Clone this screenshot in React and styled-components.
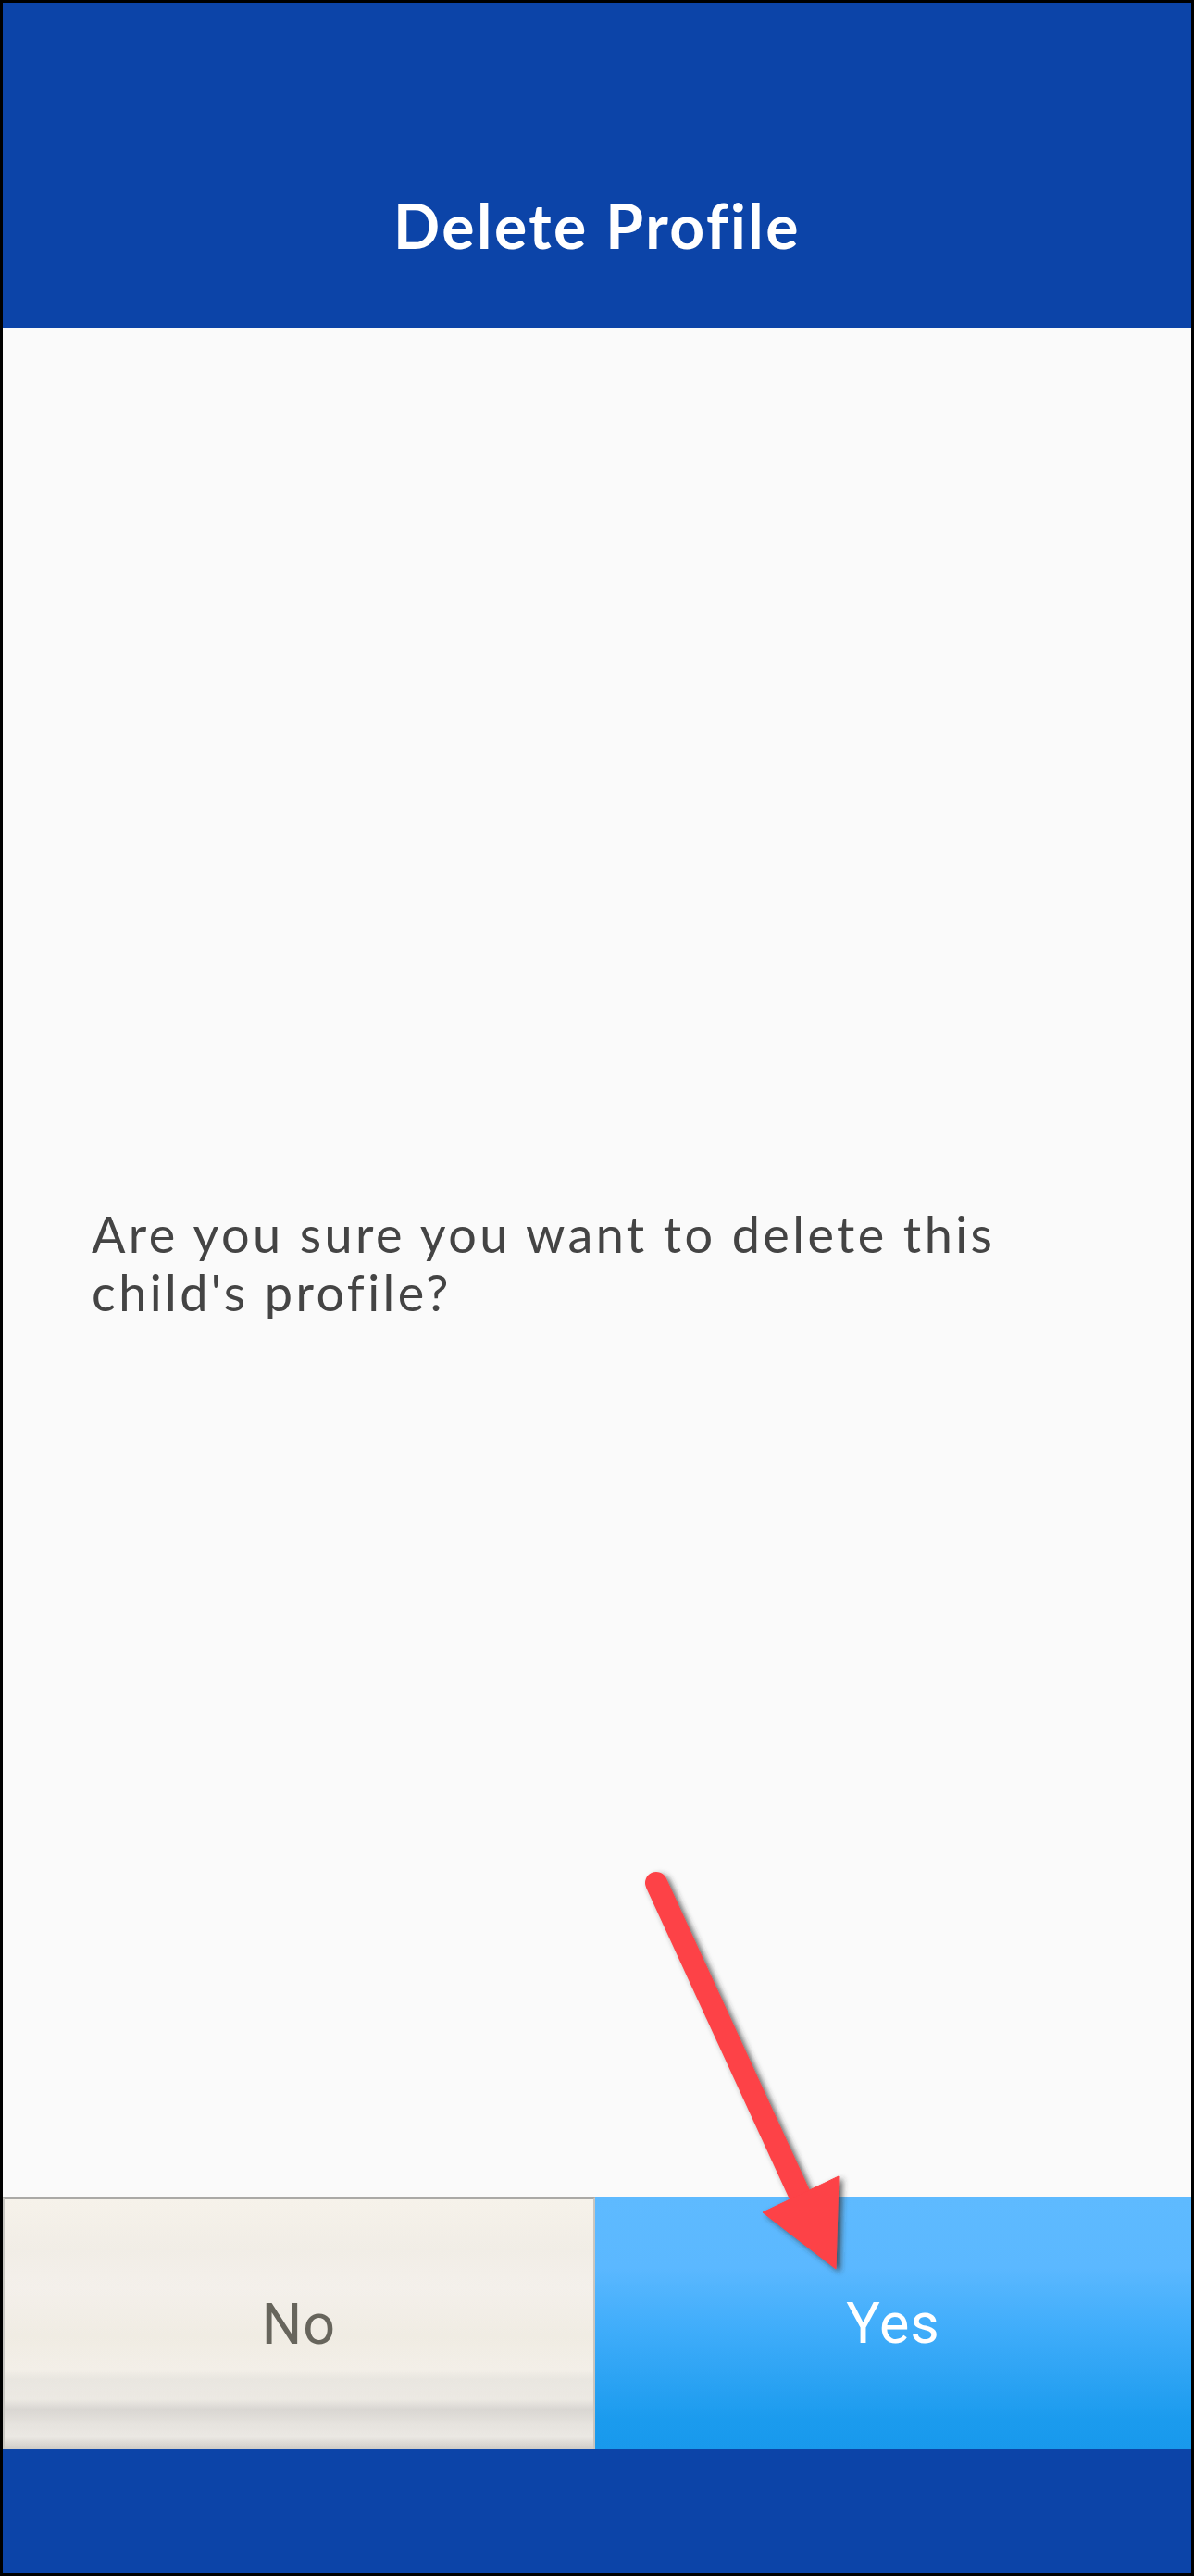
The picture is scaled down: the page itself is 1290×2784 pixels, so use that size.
import styled, { createGlobalStyle } from "styled-components";

const GlobalStyle = createGlobalStyle`
  html, body {
    margin: 0;
    padding: 0;
    background: #000;
  }
  * {
    box-sizing: border-box;
  }
`;

const Screen = styled.div`
  position: relative;
  width: 1290px;
  height: 2784px;
  border: 3px solid #000;
  display: flex;
  flex-direction: column;
  background: #fafafa;
  overflow: hidden;
`;

const Header = styled.header`
  height: 352px;
  flex: none;
  background: #0c44a8;
  display: flex;
  align-items: flex-end;
  justify-content: center;
  padding-bottom: 78px;
`;

const Title = styled.h1`
  margin: 0;
  color: #fff;
  font-family: Lato, "Open Sans", sans-serif;
  font-weight: 700;
  font-size: 66px;
  line-height: 1;
  letter-spacing: 2.5px;
`;

const Body = styled.main`
  flex: 1;
  display: flex;
  align-items: center;
  padding: 0 96px;
`;

const Question = styled.p`
  margin: 0;
  color: #444;
  font-family: Lato, "Open Sans", sans-serif;
  font-weight: 400;
  font-size: 54px;
  line-height: 63px;
  letter-spacing: 3.4px;
  max-width: 1040px;
`;

const Actions = styled.div`
  height: 273px;
  flex: none;
  display: grid;
  grid-template-columns: 640px 1fr;
`;

const ChoiceButton = styled.button`
  border: none;
  margin: 0;
  padding: 0;
  font-family: Roboto, "Open Sans", sans-serif;
  font-size: 61px;
  font-weight: 400;
  letter-spacing: 1px;
  display: flex;
  align-items: center;
  justify-content: center;
  color: ${(p) => (p.$primary ? "#fff" : "#67655c")};
  background: ${(p) =>
    p.$primary
      ? "linear-gradient(180deg, #5ebaff 0%, #5bb8ff 28%, #42aefb 50%, #2ea4f4 70%, #1b9bee 88%, #1899ec 100%)"
      : "linear-gradient(180deg, #f6f2ea 0%, #f1ede6 20%, #f4f0eb 35%, #f0ece3 55%, #f3efe8 68%, #e9e6e0 72%, #ece9e3 80%, #d9d6d2 84%, #e6e3de 90%, #ebe8e3 95%, #cfccc7 100%)"};
  ${(p) =>
    !p.$primary &&
    `
    border-top: 3px solid #aaa9a6;
    border-left: 2px solid #c9c7c2;
    border-right: 2px solid #c9c6c0;
  `}
`;

const Footer = styled.footer`
  height: 134px;
  flex: none;
  background: #0c44a8;
`;

const ArrowOverlay = styled.svg`
  position: absolute;
  left: 0;
  top: 0;
  width: 1290px;
  height: 2784px;
  pointer-events: none;
`;

export default function App() {
  return (
    <>
      <GlobalStyle />
      <Screen>
        <Header>
          <Title>Delete Profile</Title>
        </Header>
        <Body>
          <Question>
            Are you sure you want to delete this child's profile?
          </Question>
        </Body>
        <Actions>
          <ChoiceButton>No</ChoiceButton>
          <ChoiceButton $primary>Yes</ChoiceButton>
        </Actions>
        <Footer />
        <ArrowOverlay viewBox="0 0 1290 2784">
          <defs>
            <filter id="arrowShadow" x="-20%" y="-20%" width="140%" height="140%">
              <feDropShadow dx="4" dy="3" stdDeviation="3" floodColor="#333" floodOpacity="0.75" />
            </filter>
          </defs>
          <g filter="url(#arrowShadow)" fill="#fd4246" stroke="#fd4246">
            <line x1="706" y1="2032" x2="866" y2="2380" strokeWidth="24" strokeLinecap="round" />
            <polygon points="900,2449 821,2388 903,2349" strokeWidth="1" strokeLinejoin="miter" />
          </g>
        </ArrowOverlay>
      </Screen>
    </>
  );
}
